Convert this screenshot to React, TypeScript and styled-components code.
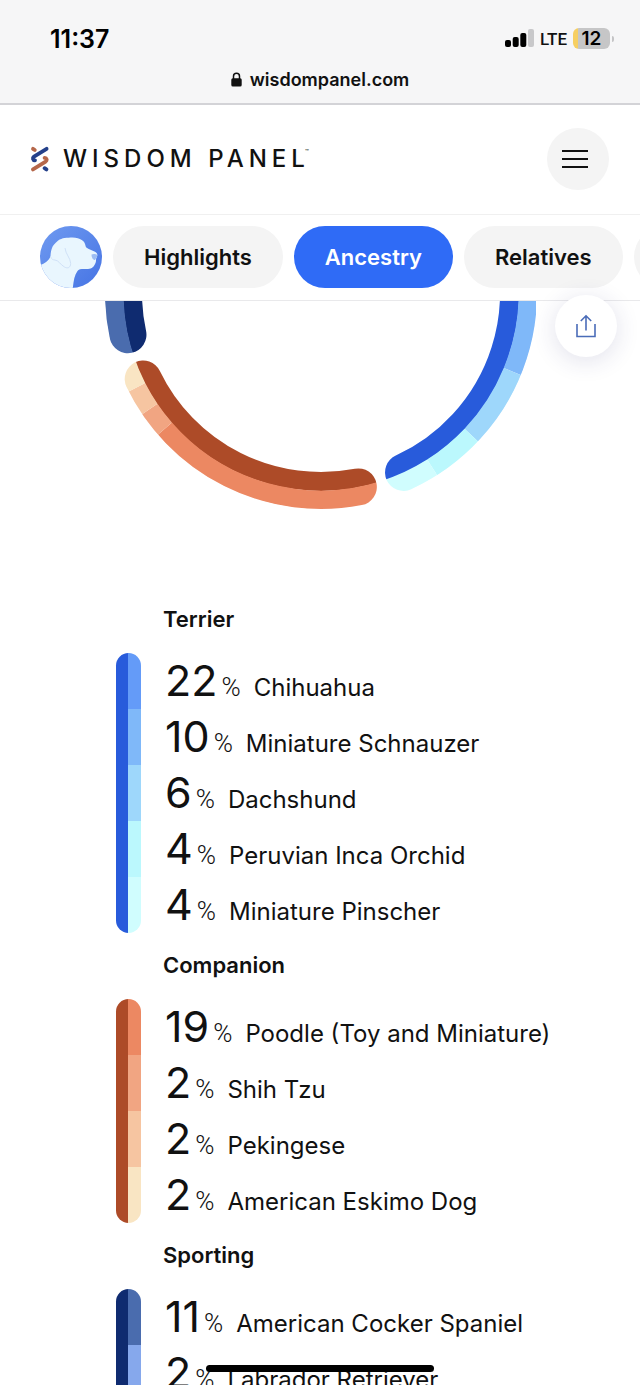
import React from 'react';
import styled, { createGlobalStyle } from 'styled-components';

const GlobalStyle = createGlobalStyle`
  *, *::before, *::after { box-sizing: border-box; }
  body {
    margin: 0;
    background: #fff;
    color: #111;
    font-family: Inter, "Liberation Sans", sans-serif;
  }
  button { font: inherit; color: inherit; border: 0; padding: 0; cursor: pointer; }
`;

const Screen = styled.div`
  position: relative;
  display: flex;
  flex-direction: column;
  height: 100vh;
  overflow: hidden;
`;

const BrowserBar = styled.header`
  flex: none;
  background: #f6f6f7;
  border-bottom: 2px solid #d3d3d7;
`;

const StatusRow = styled.div`
  display: flex;
  align-items: center;
  justify-content: space-between;
  height: 61px;
  padding: 16px 26px 0 50px;
`;

const Clock = styled.time`
  font-size: 25px;
  line-height: 28px;
  font-weight: 600;
  color: #000;
`;

const Indicators = styled.div`
  display: flex;
  align-items: center;
  gap: 6px;
`;

const Network = styled.span`
  font: 500 17px/20px Roboto, sans-serif;
  color: #111;
`;

const AddressRow = styled.div`
  display: flex;
  align-items: center;
  justify-content: center;
  gap: 8px;
  height: 42px;
  padding-bottom: 5px;
  font-size: 18px;
  line-height: 24px;
  font-weight: 600;
  color: #111;
`;

const SiteHeader = styled.div`
  flex: none;
  display: flex;
  align-items: center;
  justify-content: space-between;
  height: 110px;
  padding: 0 31px 1px 30px;
  border-bottom: 1px solid #f0f0f0;
`;

const Brand = styled.a`
  display: flex;
  align-items: center;
  gap: 13px;
  color: #111;
  text-decoration: none;
`;

const BrandName = styled.span`
  display: flex;
  align-items: flex-start;
  font: 500 24px/28px Inter, sans-serif;
  letter-spacing: 5px;
`;

const Trademark = styled.sup`
  margin-left: -5px;
  font-size: 6px;
  line-height: 14px;
  letter-spacing: 0;
`;

const MenuButton = styled.button`
  display: flex;
  align-items: center;
  justify-content: flex-start;
  width: 62px;
  height: 62px;
  && { padding-left: 15px; }
  border-radius: 50%;
  background: #f4f4f4;
`;

const TabBar = styled.nav`
  flex: none;
  display: flex;
  align-items: center;
  gap: 11px;
  height: 86px;
  padding: 0 0 1px 40px;
  border-bottom: 1px solid #e9e9eb;
  overflow: hidden;
`;

const Avatar = styled.svg`
  flex: none;
  width: 62px;
  height: 62px;
`;

const Tab = styled.button<{ $active?: boolean }>`
  flex: none;
  height: 62px;
  min-width: 158px;
  padding: 0 31px;
  border-radius: 31px;
  background: ${(p) => (p.$active ? '#2f6bf6' : '#f4f4f4')};
  color: ${(p) => (p.$active ? '#fff' : '#111')};
  font-size: 22px;
  line-height: 26px;
  font-weight: 600;
`;

const Content = styled.main`
  position: relative;
  flex: 1;
  min-height: 0;
`;

const ShareButton = styled.button`
  position: absolute;
  top: -6px;
  right: 23px;
  display: grid;
  place-items: center;
  width: 62px;
  height: 62px;
  border-radius: 50%;
  background: #fff;
  box-shadow: 0 4px 24px rgba(40, 40, 110, 0.14);
`;

const ChartArea = styled.div`
  display: flex;
  justify-content: center;
  height: 286px;
`;

const Groups = styled.div`
  padding: 0 24px 0 116px;
`;

const GroupTitle = styled.h2`
  display: flex;
  align-items: flex-end;
  height: 66px;
  margin: 0;
  padding: 0 0 21px 47px;
  font-size: 22px;
  line-height: 26px;
  font-weight: 600;
`;

const GroupBody = styled.div`
  display: flex;
  gap: 24px;
`;

const ColorBar = styled.div<{ $base: string }>`
  flex: none;
  display: flex;
  flex-direction: column;
  width: 25px;
  padding-left: 12px;
  border-radius: 13px;
  background: linear-gradient(to right, ${(p) => p.$base} 12px, transparent 12px);
  overflow: hidden;
`;

const Shade = styled.span<{ $color: string }>`
  flex: 1;
  background: ${(p) => p.$color};
`;

const BreedList = styled.ul`
  margin: 0;
  padding: 0;
  list-style: none;
`;

const BreedRow = styled.li`
  display: flex;
  align-items: baseline;
  height: 56px;
  padding-top: 1px;
  white-space: nowrap;
`;

const Amount = styled.span`
  font-size: 43px;
  line-height: 52px;
  font-weight: 400;
`;

const Percent = styled.span`
  margin: 0 13px 0 4px;
  font: 300 26px/30px Roboto, sans-serif;
`;

const BreedName = styled.span`
  font-size: 24px;
  line-height: 30px;
  font-weight: 400;
`;

const HomeIndicator = styled.div`
  position: absolute;
  bottom: 13px;
  left: 50%;
  width: 228px;
  height: 7px;
  margin-left: -114px;
  border-radius: 4px;
  background: #000;
`;

type Breed = { pct: number; name: string; color: string };
type Group = { title: string; base: string; breeds: Breed[] };

const groups: Group[] = [
  {
    title: 'Terrier',
    base: '#285bdb',
    breeds: [
      { pct: 22, name: 'Chihuahua', color: '#649bf8' },
      { pct: 10, name: 'Miniature Schnauzer', color: '#7fb8f9' },
      { pct: 6, name: 'Dachshund', color: '#9ed7fb' },
      { pct: 4, name: 'Peruvian Inca Orchid', color: '#bbf8fd' },
      { pct: 4, name: 'Miniature Pinscher', color: '#d0fdfe' },
    ],
  },
  {
    title: 'Companion',
    base: '#ad4b28',
    breeds: [
      { pct: 19, name: 'Poodle (Toy and Miniature)', color: '#ec8862' },
      { pct: 2, name: 'Shih Tzu', color: '#f1a582' },
      { pct: 2, name: 'Pekingese', color: '#f6c5a1' },
      { pct: 2, name: 'American Eskimo Dog', color: '#f9e5c3' },
    ],
  },
  {
    title: 'Sporting',
    base: '#0f2b70',
    breeds: [
      { pct: 11, name: 'American Cocker Spaniel', color: '#4a6cae' },
      { pct: 2, name: 'Labrador Retriever', color: '#86a8ec' },
    ],
  },
];

/* Angles are degrees clockwise from the bottom of the ring. */
const point = (deg: number, r: number) => {
  const a = (deg * Math.PI) / 180;
  return `${(-Math.sin(a) * r).toFixed(2)} ${(Math.cos(a) * r).toFixed(2)}`;
};
const arc = (from: number, to: number, r: number) =>
  `M${point(from, r)}A${r} ${r} 0 0 1 ${point(to, r)}`;

const rings = [
  {
    id: 'terrier',
    base: '#285bdb',
    cap: [-120, -24.7],
    parts: [
      [-125, -102.7, '#649bf8'],
      [-102.7, -67.7, '#7fb8f9'],
      [-67.7, -46.6, '#9ed7fb'],
      [-46.6, -32.5, '#bbf8fd'],
      [-32.5, -17, '#d0fdfe'],
    ],
  },
  {
    id: 'companion',
    base: '#ad4b28',
    cap: [-10.9, 64.2],
    parts: [
      [-18, 49, '#ec8862'],
      [49, 55.9, '#f1a582'],
      [55.9, 62.9, '#f6c5a1'],
      [62.9, 72, '#f9e5c3'],
    ],
  },
  {
    id: 'sporting',
    base: '#0f2b70',
    cap: [77.8, 115],
    parts: [[70, 118, '#4a6cae']],
  },
] as const;

const AncestryRing = () => (
  <svg width="432" height="217" viewBox="-217 8 432 217" role="img" aria-label="Ancestry chart">
    {rings.map((ring) => (
      <g key={ring.id} fill="none">
        <mask id={ring.id} maskUnits="userSpaceOnUse" x="-220" y="-220" width="440" height="440">
          <path
            d={arc(ring.cap[0], ring.cap[1], 197.5)}
            stroke="#fff"
            strokeWidth="37"
            strokeLinecap="round"
          />
        </mask>
        <g mask={`url(#${ring.id})`}>
          <path d={arc(ring.parts[0][0], ring.parts[ring.parts.length - 1][1], 188)} stroke={ring.base} strokeWidth="20" />
          {ring.parts.map(([from, to, color]) => (
            <path key={color} d={arc(from, to, 207)} stroke={color} strokeWidth="19" />
          ))}
        </g>
      </g>
    ))}
  </svg>
);

const SignalIcon = () => (
  <svg width="29" height="19" viewBox="0 0 29 19" aria-hidden="true">
    <rect x="0" y="11" width="6" height="7" rx="2" fill="#000" />
    <rect x="7.7" y="8" width="6" height="10" rx="2" fill="#000" />
    <rect x="15.3" y="4" width="6" height="14" rx="2" fill="#000" />
    <rect x="23" y="0" width="6" height="18" rx="2" fill="#c8c8ca" />
  </svg>
);

const BatteryBox = styled.span`
  display: flex;
  align-items: center;
  gap: 2px;
  &::after {
    content: '';
    width: 2px;
    height: 6px;
    border-radius: 0 2px 2px 0;
    background: #c4c4c6;
  }
`;

const BatteryLevel = styled.span`
  width: 37px;
  height: 21px;
  border-radius: 6px;
  background: linear-gradient(to right, #f6cf62 5px, #c6c6c7 5px);
  font-size: 19px;
  line-height: 21px;
  font-weight: 600;
  text-align: center;
  color: #000;
`;

const LockIcon = () => (
  <svg width="11" height="15" viewBox="0 0 11 15" aria-hidden="true">
    <path d="M2.5 7V4.2a3 3 0 0 1 6 0V7" fill="none" stroke="#111" strokeWidth="1.5" />
    <rect x="0.3" y="6.2" width="10.4" height="8.4" rx="1.6" fill="#111" />
  </svg>
);

const HelixIcon = () => (
  <svg width="20" height="26" viewBox="0 0 20 26" fill="none" strokeWidth="3.8" strokeLinecap="round" strokeLinejoin="round" aria-hidden="true">
    <path d="M3 2.8L4.8 4" stroke="#b5674a" />
    <path d="M14.6 22.200L16.4 23.4" stroke="#24408a" />
    <path d="M16.6 2.8L4 10.6C2.2 12 2.8 14.2 5 14.4" stroke="#24408a" />
    <path d="M3 23.4L15.6 15.6C17.4 14.2 16.8 12 14.6 11.8" stroke="#b5674a" />
  </svg>
);

const MenuIcon = () => (
  <svg width="26" height="20" viewBox="0 0 26 20" stroke="#111" strokeWidth="2" aria-hidden="true">
    <path d="M0 2H26M0 10H26M0 18H26" />
  </svg>
);

const ShareIcon = () => (
  <svg width="20" height="24" viewBox="0 0 20 24" fill="none" stroke="#4a6cb8" strokeWidth="1.6" aria-hidden="true">
    <path d="M1 10V22.5H19V10M10 16.5V2M4.8 7L10 1.8L15.2 7" />
  </svg>
);

const DogAvatar = () => (
  <Avatar viewBox="0 0 62 62" role="img" aria-label="Dog profile">
    <defs>
      <linearGradient id="sky" x1="0" y1="0" x2="1" y2="1">
        <stop offset="0" stopColor="#6f9af0" />
        <stop offset="1" stopColor="#4674e4" />
      </linearGradient>
      <clipPath id="disc">
        <circle cx="31" cy="31" r="31" />
      </clipPath>
    </defs>
    <g clipPath="url(#disc)">
      <rect width="62" height="62" fill="url(#sky)" />
      <path
        d="M-1 39.5C4 38 9 35 10.5 30C11 24 12 20 15.5 17C19 13 23 11.7 28.5 11.7C35 11 39 12 41.7 14C45 16 45 18 46 21.3C49 23.5 52 24.5 55 25.7C57.5 27 57.8 29 56.8 31C55.5 33 56.5 34.5 55.7 36.5C54 41 52 42.5 48 43C43 43 39 42.5 37.5 45C34.5 49 33.5 55 32.7 63H-1Z"
        fill="#e9f6fe"
      />
      <path d="M51.5 28.5C51.5 31.5 53 34 55 34C56 32.5 57.3 31 57.3 29C56 28 53.5 27.5 51.5 28.5Z" fill="#9dbdf3" />
      <path d="M25 22C25.5 28 30.5 32 30.7 37.5C30.5 41.5 28 43 24.5 41C20 38.5 19 34.5 15 34C13 34 11.5 33 10.7 31" fill="none" stroke="#cfe0f6" strokeWidth="1" />
    </g>
  </Avatar>
);

export default function App() {
  return (
    <Screen>
      <GlobalStyle />
      <BrowserBar>
        <StatusRow>
          <Clock>11:37</Clock>
          <Indicators>
            <SignalIcon />
            <Network>LTE</Network>
            <BatteryBox>
              <BatteryLevel>12</BatteryLevel>
            </BatteryBox>
          </Indicators>
        </StatusRow>
        <AddressRow>
          <LockIcon />
          <span>wisdompanel.com</span>
        </AddressRow>
      </BrowserBar>

      <SiteHeader>
        <Brand href="#home">
          <HelixIcon />
          <BrandName>
            WISDOM PANEL<Trademark>™</Trademark>
          </BrandName>
        </Brand>
        <MenuButton aria-label="Menu">
          <MenuIcon />
        </MenuButton>
      </SiteHeader>

      <TabBar>
        <DogAvatar />
        <Tab>Highlights</Tab>
        <Tab $active>Ancestry</Tab>
        <Tab>Relatives</Tab>
        <Tab aria-label="More results" />
      </TabBar>

      <Content>
        <ChartArea>
          <AncestryRing />
        </ChartArea>
        <ShareButton aria-label="Share">
          <ShareIcon />
        </ShareButton>
        <Groups>
          {groups.map((group) => (
            <section key={group.title}>
              <GroupTitle>{group.title}</GroupTitle>
              <GroupBody>
                <ColorBar $base={group.base}>
                  {group.breeds.map((b) => (
                    <Shade key={b.name} $color={b.color} />
                  ))}
                </ColorBar>
                <BreedList>
                  {group.breeds.map((b) => (
                    <BreedRow key={b.name}>
                      <Amount>{b.pct}</Amount>
                      <Percent>%</Percent>
                      <BreedName>{b.name}</BreedName>
                    </BreedRow>
                  ))}
                </BreedList>
              </GroupBody>
            </section>
          ))}
        </Groups>
      </Content>
      <HomeIndicator />
    </Screen>
  );
}
